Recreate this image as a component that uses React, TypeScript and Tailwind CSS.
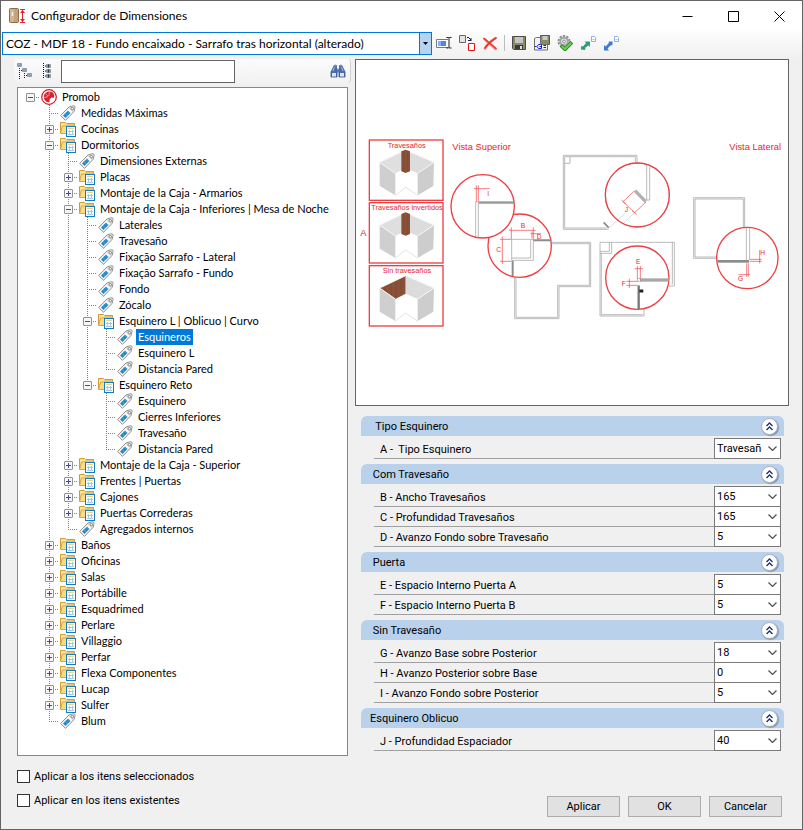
import React, { FC, ReactNode, useState } from 'react'

interface TreeItem {
  label: string,
  open?: boolean,
  children?: TreeItem[]
}

interface Field {
  label: string,
  value: string
}

interface Section {
  title: string,
  fields: Field[]
}

const folder = (label: string): TreeItem => ({ label, children: [] })

const tree: TreeItem = {
  label: 'Promob',
  open: true,
  children: [
    { label: 'Medidas Máximas' },
    folder('Cocinas'),
    {
      label: 'Dormitorios',
      open: true,
      children: [
        { label: 'Dimensiones Externas' },
        folder('Placas'),
        folder('Montaje de la Caja - Armarios'),
        {
          label: 'Montaje de la Caja - Inferiores | Mesa de Noche',
          open: true,
          children: [
            { label: 'Laterales' },
            { label: 'Travesaño' },
            { label: 'Fixação Sarrafo - Lateral' },
            { label: 'Fixação Sarrafo - Fundo' },
            { label: 'Fondo' },
            { label: 'Zócalo' },
            {
              label: 'Esquinero L | Oblicuo | Curvo',
              open: true,
              children: [
                { label: 'Esquineros' },
                { label: 'Esquinero L' },
                { label: 'Distancia Pared' },
              ],
            },
            {
              label: 'Esquinero Reto',
              open: true,
              children: [
                { label: 'Esquinero' },
                { label: 'Cierres Inferiores' },
                { label: 'Travesaño' },
                { label: 'Distancia Pared' },
              ],
            },
          ],
        },
        folder('Montaje de la Caja - Superior'),
        folder('Frentes | Puertas'),
        folder('Cajones'),
        folder('Puertas Correderas'),
        { label: 'Agregados internos' },
      ],
    },
    folder('Baños'),
    folder('Oficinas'),
    folder('Salas'),
    folder('Portábille'),
    folder('Esquadrimed'),
    folder('Perlare'),
    folder('Villaggio'),
    folder('Perfar'),
    folder('Flexa Componentes'),
    folder('Lucap'),
    folder('Sulfer'),
    { label: 'Blum' },
  ],
}

const sections: Section[] = [
  { title: '  Tipo Esquinero', fields: [{ label: 'A -  Tipo Esquinero', value: 'Travesaños' }] },
  {
    title: ' Com Travesaño',
    fields: [
      { label: 'B - Ancho Travesaños', value: '165' },
      { label: 'C - Profundidad Travesaños', value: '165' },
      { label: 'D - Avanzo Fondo sobre Travesaño', value: '5' },
    ],
  },
  {
    title: ' Puerta',
    fields: [
      { label: 'E - Espacio Interno Puerta A', value: '5' },
      { label: 'F - Espacio Interno Puerta B', value: '5' },
    ],
  },
  {
    title: ' Sin Travesaño',
    fields: [
      { label: 'G - Avanzo Base sobre Posterior', value: '18' },
      { label: 'H - Avanzo Posterior sobre Base', value: '0' },
      { label: 'I - Avanzo Fondo sobre Posterior', value: '5' },
    ],
  },
  { title: 'Esquinero Oblicuo', fields: [{ label: 'J - Profundidad Espaciador', value: '40' }] },
]

/* ---------- Icons ---------- */

const Icon: FC<{ children: ReactNode }> = ({ children }) => (
  <svg viewBox='0 0 16 16' className='w-4 h-4 shrink-0' fill='none' aria-hidden='true'>{children}</svg>
)

const AppIcon = () => (
  <svg viewBox='0 0 17 16' className='w-[17px] h-4 shrink-0' fill='none' aria-hidden='true'>
    <rect x='0.5' y='0.5' width='9' height='14' rx='1' fill='#c4a27a' stroke='#8a6a48' />
    <path d='M1 1h4v13H1z' fill='#d2b591' />
    <path d='M3.5 4v4' stroke='#f4f0ea' strokeWidth='1.500' />
    <path d='M11 1.5h5M11 14.5h5M13.5 2v12' stroke='#e2232e' />
    <path d='M13.5 2l2.500 3h-5zM13.5 14l2.500-3h-5z' fill='#e2232e' />
  </svg>
)

const PromobIcon = () => (
  <Icon>
    <circle cx='8' cy='8' r='7.3' fill='#fff' stroke='#c5202c' strokeWidth='1.2' />
    <path d='M8.6 2.6C11.6 2.6 13.2 4.6 13.2 7c0 1-.4 1.6-1 2l-1.8-.6-.6 1.2-1 .2-.4 3.6C5 13.200 2.800 11 2.800 8S5 2.600 8.600 2.600z' fill='#d8242f' />
    <path d='M8.400 3l-.6 4M3 8.400l4-.6M4.200 4.600l3 2.600' stroke='#f6b9bc' strokeWidth='.7' />
  </Icon>
)

const TagIcon = () => (
  <Icon>
    <path d='M9 2L13.500.700q1.800 0 1.500 1.800L14 6.500 5.500 15.300.700 10.500z' fill='#fafafa' stroke='#8a8a8a' />
    <path d='M9.500 2.500l4-1.300 1 1-.8 3.800-1 1-4-4z' fill='#cfcfcf' />
    <circle cx='12.300' cy='3.700' r='1.200' fill='#fff' stroke='#777' strokeWidth='.8' />
    <path d='M8 5.500l2.500 2.500-5 5L3 10.500z' fill='#2389cb' />
    <path d='M7.500 6l2.500 2.500M5 8.500L7.500 11' stroke='#7cc2ea' strokeWidth='.5' />
  </Icon>
)

const FolderIcon = () => (
  <Icon>
    <path d='M.5 12.500V1.500h5l1 1h8v4' fill='#fbe39a' stroke='#d39a35' />
    <path d='M.5 12.500l2-7.500h3l1-1h8v8.500z' fill='#fbdc80' stroke='#d9a446' />
    <rect x='6.500' y='5.500' width='9' height='10' fill='#fff' stroke='#157dbb' />
    <path d='M8 7.500h6' stroke='#f6cf84' />
    <path d='M8 10.500h6M8 13.500h6M9.500 9v5M12.500 9v5' stroke='#a3c8ea' />
  </Icon>
)

const RenameIcon = () => (
  <Icon>
    <path d='M12 4.500H.5v8H12' fill='#fff' stroke='#6d7c96' />
    <path d='M2 6h8v5H2z' fill='#4d86e8' />
    <path d='M2 6h3v5H2z' fill='#8bb1f2' />
    <path d='M10.500 2.500h2l.5.500.5-.5h2M13 3v9.500M10.500 13h2l.5-.5.5.5h2' stroke='#222' />
  </Icon>
)

const ReplaceIcon = () => (
  <Icon>
    <path d='M.5.500h6v7h-6z' fill='#e4e4e4' stroke='#6f6468' />
    <path d='M8 2.500h2M10 3.500h1M12 3v3M9 5.500h3M11 4.500h1' stroke='#10206e' />
    <path d='M9.500 8.500h6v7h-6z' fill='#fff' stroke='#e11313' />
  </Icon>
)

const DeleteIcon = () => (
  <Icon>
    <path d='M2.500 4l11 10M13.500 3C9 6 5 10 3 13.500' stroke='#f8958e' strokeWidth='2.600' strokeLinecap='round' />
    <path d='M2 3.500l12 10M14 3C9 6 5 10 3 13' stroke='#e8352c' strokeWidth='1.600' strokeLinecap='round' />
  </Icon>
)

const SaveIcon = () => (
  <Icon>
    <path d='M1.500 1.500h13v13h-12l-1-1z' fill='#8a8965' stroke='#4a4a46' />
    <path d='M4 2h8v6H4z' fill='#c3c5c8' />
    <path d='M4 10h8v4H4z' fill='#3a3a38' />
    <path d='M9 11h2v3H9z' fill='#dedede' />
  </Icon>
)

const SaveAsIcon = () => (
  <Icon>
    <path d='M6.500.500h9v9h-9z' fill='#8a8965' stroke='#55554c' />
    <path d='M8.500 1h5v4h-5z' fill='#c8cacc' />
    <path d='M.5 3.500l2-1h4v7h7v5.500H.5z' fill='#f2f2f4' stroke='#6f6f78' />
    <path d='M1 11.500h1.500M6.500 9.500h-2l-1.500 2 1.500 2h3v-4M5.500 11.500h2M9.500 10.500H12M9.500 12.500H12' stroke='#1420d8' />
  </Icon>
)

const GearCheckIcon = () => (
  <Icon>
    <circle cx='7' cy='6.500' r='5.500' stroke='#8d9092' strokeWidth='2' strokeDasharray='2.300 1.150' />
    <circle cx='7' cy='6.500' r='3.800' fill='#e6e7e8' stroke='#a4a7a9' strokeWidth='2' />
    <circle cx='7' cy='6.500' r='1.400' fill='#fff' stroke='#85888a' />
    <path d='M4 10.500l4 3.800 7-7' stroke='#237f1c' strokeWidth='3.600' />
    <path d='M4.600 10.900L8 14l6.400-6.300' stroke='#65d24a' strokeWidth='2' />
  </Icon>
)

const PageCorner = () => (
  <>
    <path d='M11.500 1.500h3l1 1v4h-4z' fill='#fff' stroke='#8fb0dc' />
    <path d='M12.500 4.500h2' stroke='#a8c3e8' />
  </>
)

const ExportIcon = () => (
  <Icon>
    <PageCorner />
    <path d='M1 14.500v-3l2.500-.5 2.500-3-1.500-1.500h5.500V12l-1.500-1.500-3 2-.5 2.500z' fill='#2f9f78' />
  </Icon>
)

const ImportIcon = () => (
  <Icon>
    <PageCorner />
    <path d='M1 15.500V10l1.500 1.500 3-3 .5-2h3.500V10l-2 .5-3 3 1.500 2z' fill='#3c7bcb' />
  </Icon>
)

const CollapseAllIcon = () => (
  <Icon>
    <path d='M2.500 5v11M4 7.500h2M7.500 10v6M9 12.500h2' stroke='#222' strokeDasharray='1 1' />
    <path d='M.5.500h4v3h-4zM5.500 5.500h4v3h-4zM10.500 10.500h4v3h-4z' fill='#eef4f8' stroke='#8a9aa6' />
    <path d='M1 2h3M6 7h3M11 12h3' stroke='#32567a' />
  </Icon>
)

const ExpandAllIcon = () => (
  <Icon>
    <path d='M2.500 0v16M4 3h2M4 8h2M4 13h2' stroke='#111' strokeDasharray='1 1' />
    <path d='M5.500 1.500h4v3h-4zM5.500 6.500h4v3h-4zM5.500 11.500h4v3h-4z' fill='#eef4f8' stroke='#8a9aa6' />
    <path d='M6 3h3M7.500 1.500v3M6 8h3M7.500 6.500v3M6 13h3M7.500 11.500v3' stroke='#333' />
  </Icon>
)

const BinocularsIcon = () => (
  <Icon>
    <path d='M4 2.500h2.500v2l.5 1.500v8H1V9l2.500-5zM12 2.500H9.500v2L9 6v8h6V9l-2.500-5z' fill='#4a6dad' stroke='#36558f' strokeWidth='.8' />
    <path d='M6.500 6.500h3v3h-3z' fill='#5577b5' />
    <path d='M2 10h4v3.500H2zM10 10h4v3.500h-4z' fill='#dbe5f5' />
    <path d='M4.500 4L3 8M11.500 4L13 8' stroke='#a9c0e6' />
    <circle cx='5.300' cy='2.500' r='1.100' fill='#7d9ace' />
    <circle cx='10.700' cy='2.500' r='1.100' fill='#7d9ace' />
  </Icon>
)

const Chevron = () => (
  <svg viewBox='0 0 9 5' className='pointer-events-none absolute right-1 top-2 w-[9px] h-[5px]' fill='none' aria-hidden='true'>
    <path d='M.5.500l4 4 4-4' stroke='#505050' strokeWidth='1.200' />
  </svg>
)

/* ---------- Tree ---------- */

// One 19px column of the dotted connector lines
const Guide: FC<{ top?: boolean, bottom?: boolean, right?: boolean }> = ({ top, bottom, right }) => (
  <svg viewBox='0 0 19 16' className='w-[19px] h-4 shrink-0' fill='none' stroke='#808080' strokeDasharray='1 1' aria-hidden='true'>
    {top && <path d='M9.500 0v8' />}
    {bottom && <path d='M9.500 8v8' />}
    {right && <path d='M9 8.500h10' />}
  </svg>
)

interface NodeProps {
  item: TreeItem,
  path: string,
  // for every ancestor column, whether its line goes on below this row
  guides: boolean[],
  last: boolean,
  selected: string,
  onSelect: (path: string) => void
}

const TreeNode: FC<NodeProps> = ({ item, path, guides, last, selected, onSelect }) => {
  const [isOpen, setIsOpen] = useState<boolean>(!!item.open)
  const isRoot = path === '0'
  const isSelected = selected === path

  return (
    <li>
      <div className='flex items-center h-4'>
        {guides.map((on, i) => <Guide key={i} top={on} bottom={on} />)}
        <div className='relative w-[19px] h-4 shrink-0'>
          <Guide top={!isRoot} bottom={!isRoot && !last} right />
          {item.children &&
            <button
              aria-label={item.label}
              onClick={() => setIsOpen(!isOpen)}
              className='absolute left-[5px] top-1 w-[9px] h-[9px] rounded-[1px] border border-[#919191] bg-[#f6f6f6]'
            >
              <svg viewBox='0 0 7 7' className='w-[7px] h-[7px]' stroke='#3a4fa0' aria-hidden='true'>
                <path d={isOpen ? 'M1 3.500h5' : 'M1 3.500h5M3.500 1v5'} />
              </svg>
            </button>
          }
        </div>
        <button onClick={() => onSelect(path)} className='ml-px flex items-center gap-[3px] h-4'>
          {isRoot ? <PromobIcon /> : item.children ? <FolderIcon /> : <TagIcon />}
          <span className={`px-0.5 h-4 leading-4 whitespace-nowrap ${isSelected ? 'bg-[#0078d7] text-white' : ''}`}>{item.label}</span>
        </button>
      </div>

      {isOpen && item.children &&
        <ul>
          {item.children.map((child, i) => (
            <TreeNode
              key={i}
              item={child}
              path={`${path}.${i}`}
              guides={[...guides, !isRoot && !last]}
              last={i === item.children!.length - 1}
              selected={selected}
              onSelect={onSelect}
            />
          ))}
        </ul>
      }
    </li>
  )
}

/* ---------- Diagram ---------- */

const Corner: FC<{ y: number, title: string, x: number, variant: 'post' | 'panel' }> = ({ y, title, x, variant }) => (
  <g transform={`translate(0 ${y})`}>
    <rect x='43' y='30' width='221' height='181' fill='none' stroke='#ee3f43' strokeWidth='4' />
    <path d='M74 97L152 60v54l-31 16z' fill={variant === 'panel' ? '#8a5138' : '#dfdfdf'} />
    <path d='M237 97L152 60v54l36 16z' fill='#dcdcdc' />
    {variant === 'panel' && <path d='M92 92v14M108 84v34M124 76v48M138 70v48' stroke='#7c4732' strokeWidth='2' />}
    <path d='M74 97l47 33v66l-47-28z' fill='#cfcfcf' />
    <path d='M237 97l-49 33v66l47-28z' fill='#cdcdcd' />
    <path d='M121 196l31-24 36 24' fill='none' stroke='#d5d5d5' strokeWidth='2' />
    <path d='M74 97l47 33M237 97l-49 33M74 97l78-37 85 37' fill='none' stroke='#f6f6f6' strokeWidth='3' />
    {variant === 'post' &&
      <>
        <path d='M139 64l13-5 13 5v60l-13 5-13-5z' fill='#8a5138' />
        <path d='M146 63v62M158 63v62' stroke='#7c4732' strokeWidth='2' />
      </>
    }
    <text x={x} y='53' fontSize='22' fill='#e8262b' stroke='none'>{title}</text>
  </g>
)

const Diagram = () => (
  <svg viewBox='3 0 1296 1035' className='w-full h-[345px]' fontFamily='"Liberation Sans", Arial, sans-serif' role='img' aria-label='Vista Superior, Vista Lateral'>
    {/* Corner options */}
    <g transform='translate(0 210)'>
      <Corner y={0} x={98} title='Travesaños' variant='post' />
      <Corner y={188} x={49} title='Travesaños invertidos' variant='post' />
      <Corner y={377} x={83} title='Sin travesaños' variant='panel' />
      <text x='16' y='319' fontSize='28' fill='#e8262b'>A</text>
    </g>

    {/* Top views */}
    <g transform='translate(255 240)' fill='none' stroke='#989898' strokeWidth='2'>
      <text x='37' y='29' fontSize='28' fill='#e8262b' stroke='none'>Vista Superior</text>
      <path d='M335 307h117v133h-95v96H224V412M335 311h113v125h-95v96H228V412' />
      <circle cx='239' cy='317' r='95' fill='#fff' stroke='#ee3f43' strokeWidth='4' />
      <circle cx='128' cy='199' r='95' fill='#fff' stroke='#ee3f43' strokeWidth='4' />
      <path d='M107 291V185h116M115 293V190' />
      <path d='M115 188h108' stroke='#9a9a9a' strokeWidth='6' />
      <g stroke='#ee3f43'>
        <path d='M109 136v48M115 136v48M102 146h47' />
        <path d='M214 262v36M280 262v36M207 271h80M187 290v82M180 298h34M180 364h34M272 281h31M276 275v20' />
      </g>
      <path d='M215 298h65v63h-65zM272 298v56h-57' />
      <path d='M280 301h54M218 362v46' stroke='#8c8c8c' strokeWidth='6' />
      <g fontSize='20' fill='#e8262b' stroke='none'>
        <text x='142' y='167'>I</text>
        <text x='242' y='265'>B</text>
        <text x='169' y='336'>C</text>
        <text x='290' y='297'>D</text>
      </g>
    </g>

    <g transform='translate(705 240)' fill='none' stroke='#989898' strokeWidth='2'>
      {/* Oblique corner */}
      <path d='M141 70V46H-80v222H56M136 66V50H-76v214H50M-60 50v20h-16' />
      <path d='M41 247l15 16' stroke='#888' strokeWidth='5' />
      <circle cx='142' cy='165' r='96' fill='#fff' />
      <path d='M170 76v104h9V80' />
      <path d='M135 152l32 33' stroke='#b0b0b0' strokeWidth='10' />
      <path d='M56 265l50-46M100 250l36-34' strokeWidth='1' />
      <path d='M133 153l-34 32 35 33 34-32M94 180l14 12M126 212l14 12' stroke='#ee3f43' />
      <circle cx='142' cy='165' r='96' stroke='#ee3f43' strokeWidth='4' />

      {/* Door gap */}
      <path d='M30 307h223v131h-18M30 307v221h132v-20M65 307v33H30M58 307v27H30M34 340v184h124M247 307v126' />
      <circle cx='142' cy='413' r='95' fill='#fff' stroke='#ee3f43' strokeWidth='4' />
      <path d='M150 420h86' stroke='#a8a8a8' strokeWidth='10' />
      <path d='M146 436v71' stroke='#777' strokeWidth='7' />
      <path d='M148 453h12' stroke='#222' strokeWidth='9' />
      <path d='M142 416h10v8h-10z' />
      <path d='M142 378v38M151 378v38M134 386h25M118 416v28M109 424h33M109 436h33' stroke='#ee3f43' />

      {/* Side view */}
      <path d='M464 264V173H311v182h70M460 264v-87H315v174h68' />
      <circle cx='472' cy='354' r='92' fill='#fff' stroke='#ee3f43' strokeWidth='4' />
      <path d='M469 264v96M479 264v96' />
      <path d='M382 364h95' stroke='#8c8c8c' strokeWidth='8' />
      <path d='M470 370v40M475 370v40M445 404h35M479 358h36M479 364h36M509 330v40' stroke='#ee3f43' />

      <g fontSize='20' fill='#e8262b' stroke='none'>
        <text x='104' y='217'>J</text>
        <text x='138' y='372'>E</text>
        <text x='95' y='438'>F</text>
        <text x='444' y='424'>G</text>
        <text x='511' y='345'>H</text>
        <text x='418' y='29' fontSize='28'>Vista Lateral</text>
      </g>
    </g>
  </svg>
)

/* ---------- Form ---------- */

const FieldRow: FC<{ field: Field }> = ({ field }) => (
  <label className='-mb-px flex items-stretch h-[21px]'>
    <span className='flex-1 pl-1.5 pt-1 leading-4 border-b border-[#a0a0a0] whitespace-pre'>{field.label}</span>
    <span className='relative w-[67px]'>
      <select className='appearance-none w-full h-[21px] pl-0.5 pr-[18px] bg-white border border-[#7a7a7a] leading-4 overflow-hidden' defaultValue={field.value}>
        <option>{field.value}</option>
      </select>
      <Chevron />
    </span>
  </label>
)

const FieldGroup: FC<{ section: Section }> = ({ section }) => {
  const [isShown, setIsShown] = useState<boolean>(true)

  return (
    <section className='mb-1.5'>
      <div className='flex items-center justify-between h-5 pl-[9px] pr-1.5 rounded-t-md bg-[#b9d1ea]'>
        <h2 className='pt-px leading-4 whitespace-pre'>{section.title}</h2>
        <button
          aria-label={section.title.trim()}
          onClick={() => setIsShown(!isShown)}
          className='flex items-center justify-center w-[17px] h-[17px] rounded-full border border-[#a3aec2] bg-white shadow-[1px_1px_1px_#8492ac]'
        >
          <svg viewBox='0 0 9 9' className='w-[9px] h-[9px]' fill='none' stroke='#1f3566' strokeWidth='1.400' aria-hidden='true'>
            <path d='M1.500 4L4.500 1l3 3M1.500 8l3-3 3 3' />
          </svg>
        </button>
      </div>
      {isShown &&
        <div className='pt-0.5 pb-px pl-[13px] pr-[3px] -mb-px'>
          {section.fields.map((field, i) => <FieldRow key={i} field={field} />)}
        </div>
      }
    </section>
  )
}

const ToolButton: FC<{ label: string, children: ReactNode }> = ({ label, children }) => (
  <button aria-label={label} className='flex items-center justify-center w-[23px] h-[22px] shrink-0 hover:bg-[#d8eaf9]'>{children}</button>
)

const WindowButton: FC<{ label: string, d: string }> = ({ label, d }) => (
  <button aria-label={label} className='flex items-center justify-center w-[46px] h-full hover:bg-[#e5e5e5]'>
    <svg viewBox='0 0 11 11' className='w-[11px] h-[11px]' fill='none' stroke='#000' aria-hidden='true'><path d={d} /></svg>
  </button>
)

const App = () => {
  const [selected, setSelected] = useState<string>('0.2.3.6.0')

  return (
    <div className='min-h-screen flex flex-col border border-[#646464] bg-[#f0f0f0] text-black text-[11px] leading-4 font-["Roboto",sans-serif]'>

      {/* Title bar */}
      <header className='flex items-center h-[30px] pl-2 bg-white'>
        <AppIcon />
        <h1 className='ml-[5px] flex-1 text-[12px] font-["Lato",sans-serif]'>Configurador de Dimensiones</h1>
        <div className='flex h-full'>
          <WindowButton label='Minimizar' d='M.5 5.500h10' />
          <WindowButton label='Maximizar' d='M.5.500h10v10H.5z' />
          <WindowButton label='Cerrar' d='M.5.500l10 10M10.500.500l-10 10' />
        </div>
      </header>

      {/* Preset and toolbar */}
      <div className='flex items-start h-7 pt-px pl-px bg-linear-to-b from-[#fdfdfd] to-[#f0f0f0]'>
        <div className='relative w-[430px] h-[23px]'>
          <select aria-label='Configuración' className='appearance-none w-full h-full pl-[3px] pr-4 border border-[#0078d7] bg-white text-[12px] font-["Lato",sans-serif]'>
            <option>COZ - MDF 18 - Fundo encaixado - Sarrafo tras horizontal (alterado)</option>
          </select>
          <span className='pointer-events-none absolute right-0 top-0 flex items-center justify-center w-[13px] h-[23px] border border-[#0078d7] bg-[#b3d5f2]'>
            <svg viewBox='0 0 5 3' className='w-[5px] h-[3px]' aria-hidden='true'><path d='M0 0h5L2.500 3z' /></svg>
          </span>
        </div>
        <div className='flex items-center'>
          <ToolButton label='Renombrar'><RenameIcon /></ToolButton>
          <ToolButton label='Reemplazar'><ReplaceIcon /></ToolButton>
          <ToolButton label='Eliminar'><DeleteIcon /></ToolButton>
          <span className='w-px h-4 ml-[3px] mr-0.5 bg-[#bdbdbd]' />
          <ToolButton label='Guardar'><SaveIcon /></ToolButton>
          <ToolButton label='Guardar como'><SaveAsIcon /></ToolButton>
          <ToolButton label='Validar'><GearCheckIcon /></ToolButton>
          <ToolButton label='Exportar'><ExportIcon /></ToolButton>
          <ToolButton label='Importar'><ImportIcon /></ToolButton>
        </div>
      </div>

      <div className='flex-1 flex pb-3'>

        {/* Tree column */}
        <div className='flex flex-col w-[337px] ml-[13px] shrink-0'>
          <div className='flex items-center h-6 pl-[3px] pr-1 rounded bg-linear-to-b from-[#fbfbfb] to-[#f2f2f2] border-r border-[#d0d0d0]'>
            <button aria-label='Contraer todo'><CollapseAllIcon /></button>
            <button aria-label='Expandir todo' className='ml-2'><ExpandAllIcon /></button>
            <input aria-label='Buscar' type='text' className='ml-1 w-[174px] h-[23px] px-1 border border-[#646464] bg-white' />
            <button aria-label='Buscar en el árbol' className='ml-auto'><BinocularsIcon /></button>
          </div>

          <nav className='mt-1 ml-[3px] w-[331px] min-h-[669px] pt-px pl-[3px] border border-[#828790] bg-white font-["Lato",sans-serif]'>
            <ul>
              <TreeNode item={tree} path='0' guides={[]} last selected={selected} onSelect={setSelected} />
            </ul>
          </nav>

          <div className='flex flex-col gap-2 mt-3 ml-[3px]'>
            {['Aplicar a los itens seleccionados', 'Aplicar en los itens existentes'].map((text) => (
              <label key={text} className='flex items-center gap-1 h-4'>
                <input type='checkbox' className='appearance-none w-[13px] h-[13px] border border-[#333] bg-white checked:bg-[#0078d7]' />
                <span className='pt-px'>{text}</span>
              </label>
            ))}
          </div>
        </div>

        {/* Details column */}
        <div className='flex-1 flex flex-col ml-1'>
          <div className='mr-[13px] h-[347px] border border-[#646464] bg-white'>
            <Diagram />
          </div>

          <div className='mt-2.5 ml-1.5 mr-[18px]'>
            {sections.map((section) => <FieldGroup key={section.title} section={section} />)}
          </div>

          <div className='mt-auto mr-5 flex justify-end gap-2'>
            {['Aplicar', 'OK', 'Cancelar'].map((text) => (
              <button key={text} className='w-[73px] h-[21px] border border-[#adadad] bg-[#e1e1e1] hover:border-[#0078d7] hover:bg-[#e5f1fb]'>{text}</button>
            ))}
          </div>
        </div>

      </div>
    </div>
  )
}

export default App
